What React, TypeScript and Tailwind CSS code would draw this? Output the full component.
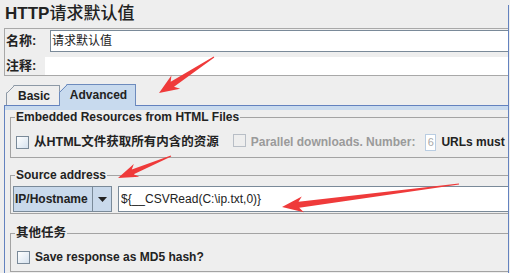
import React from "react";

const FONT = { fontFamily: '"Liberation Sans", "Noto Sans CJK SC", sans-serif' };

// tapered red arrow like a screenshot annotation tool draws
const arrowPoints = (
  tx: number,
  ty: number,
  px: number,
  py: number,
  head: number,
  half: number,
  shaft: number
) => {
  const len = Math.hypot(px - tx, py - ty);
  const dx = (px - tx) / len;
  const dy = (py - ty) / len;
  const nx = -dy;
  const ny = dx;
  const bx = px - dx * head;
  const by = py - dy * head;
  const wx = px - dx * (head + 4);
  const wy = py - dy * (head + 4);
  const pts = [
    [tx + nx * 0.6, ty + ny * 0.6],
    [bx + nx * shaft, by + ny * shaft],
    [wx + nx * half, wy + ny * half],
    [px, py],
    [wx - nx * half, wy - ny * half],
    [bx - nx * shaft, by - ny * shaft],
    [tx - nx * 0.6, ty - ny * 0.6],
  ];
  return pts.map((p) => `${p[0].toFixed(1)},${p[1].toFixed(1)}`).join(" ");
};

const Checkbox = ({ disabled }: { disabled?: boolean }) => (
  <span
    className={
      disabled
        ? "inline-block w-[13px] h-[13px] shrink-0 border border-[#b8bec6] bg-[#eeeeee]"
        : "inline-block w-[13px] h-[13px] shrink-0 border border-[#7a8a99] bg-gradient-to-br from-white to-[#d6e2ef]"
    }
  />
);

const TitledBox = ({
  title,
  className,
  titleClass,
  children,
}: {
  title: string;
  className?: string;
  titleClass?: string;
  children: React.ReactNode;
}) => (
  <fieldset
    className={`border border-r-0 border-[#a3a3a3] pl-[4px] ${className ?? ""}`}
  >
    <legend
      className={`px-[1px] h-[14px] leading-[14px] font-bold text-[#222] ${titleClass ?? "text-[12px]"}`}
    >
      {title}
    </legend>
    {children}
  </fieldset>
);

export default function App() {
  return (
    <div
      className="relative w-[510px] h-[273px] overflow-hidden bg-[#eeeeee] flex"
      style={FONT}
    >
      <div className="w-[508px] flex flex-col">
        {/* title */}
        <div className="h-[28px] pl-[5px] flex items-center text-[17px] text-[#222]">
          <span className="font-bold">HTTP</span>
          <span className="font-medium">请求默认值</span>
        </div>

        {/* name / comment */}
        <div className="ml-[4px] border-t border-l border-b border-[#a8a8a8] pt-px">
          <div className="flex h-[22px] items-center">
            <span className="w-[45px] pl-[1px] text-[13px] font-bold text-[#222]">名称:</span>
            <div className="flex-1 h-full bg-white border border-r-0 border-[#7a8a99] flex items-center pl-px text-[12px] text-[#222]">
              请求默认值
            </div>
          </div>
          <div className="flex h-[18px] items-center mt-[5px]">
            <span className="w-[40px] pl-[1px] text-[13px] font-bold text-[#222]">注释:</span>
            <div className="flex-1 h-full bg-white" />
          </div>
        </div>

        {/* tabs */}
        <div className="relative z-10 mt-[8px] ml-[6px] flex items-end h-[21px]">
          <div className="relative w-[54px] h-[20px] border-l border-t border-r border-[#8d99a6] bg-[#eeeeee] [clip-path:polygon(0_8px,8px_0,100%_0,100%_100%,0_100%)] flex items-center justify-center pl-[2px] text-[12px] font-bold text-[#222]">
            <svg className="absolute -left-px -top-px" width="10" height="10">
              <line x1="0.5" y1="8.5" x2="8.5" y2="0.5" stroke="#8d99a6" />
            </svg>
            Basic
          </div>
          <div className="relative w-[77px] h-[22px] -mb-px -ml-px border-l border-t border-r border-[#6d8bbd] bg-[#c8daee] [clip-path:polygon(0_8px,8px_0,100%_0,100%_100%,0_100%)] flex items-center justify-center pb-px pl-[2px] text-[12px] font-bold text-[#222]">
            <svg className="absolute -left-px -top-px" width="10" height="10">
              <line x1="0.5" y1="8.5" x2="8.5" y2="0.5" stroke="#6d8bbd" />
            </svg>
            Advanced
          </div>
        </div>

        {/* tab panel */}
        <div className="ml-[4px] flex-1 border-l border-t border-[#6382bf] overflow-hidden">
          <div className="h-[4px] bg-[#c8daee]" />
          <div className="pl-[5px]">
            <TitledBox title="Embedded Resources from HTML Files" className="pb-[5px]">
              <div className="flex items-center h-[20px] mt-[8px] pl-px whitespace-nowrap font-bold">
                <Checkbox />
                <span className="ml-[5px] text-[12.5px] text-[#222]">从HTML文件获取所有内含的资源</span>
                <span className="ml-[14px]">
                  <Checkbox disabled />
                </span>
                <span className="ml-[5px] text-[12px] text-[#9a9a9a]">Parallel downloads. Number:</span>
                <span className="ml-[10px] w-[11px] h-[17px] border border-[#b9cde2] bg-white flex items-center justify-center text-[11px] font-normal text-[#a8a8a8]">
                  6
                </span>
                <span className="ml-[5px] text-[12px] text-[#222]">URLs must match</span>
              </div>
            </TitledBox>

            <TitledBox title="Source address" className="mt-[10px] pb-[1px]">
              <div className="flex h-[26px] mt-[4px] -ml-[2px]">
                <div className="w-[99px] h-full flex border border-[#7a8a99] bg-[#c9d9eb]">
                  <span className="flex-1 flex items-center pl-px text-[12px] font-bold text-[#222]">
                    IP/Hostname
                  </span>
                  <span className="w-[19px] border-l border-[#7a8a99] flex items-center justify-center">
                    <svg width="9" height="5" viewBox="0 0 9 5">
                      <polygon points="0,0 9,0 4.5,5" fill="#222" />
                    </svg>
                  </span>
                </div>
                <div className="flex-1 ml-[6px] h-full bg-white border border-r-0 border-[#7a8a99] flex items-center pl-[2px] text-[12px] text-[#222]">
                  {"${__CSVRead(C:\\ip.txt,0)}"}
                </div>
              </div>
            </TitledBox>

            <TitledBox title="其他任务" titleClass="text-[12.5px]" className="mt-[12px] pb-[4px]">
              <div className="flex items-center h-[20px] mt-[7px] pl-[2px] text-[12px] font-bold text-[#222]">
                <Checkbox />
                <span className="ml-[5px]">Save response as MD5 hash?</span>
              </div>
            </TitledBox>
          </div>
        </div>
      </div>

      {/* right edge */}
      <div className="w-px flex flex-col">
        <div className="h-[5px]" />
        <div className="flex-1 bg-[#6382bf]" />
      </div>

      {/* annotation arrows */}
      <svg className="absolute inset-0 pointer-events-none" width="510" height="273">
        <polygon points={arrowPoints(214, 57, 159, 93, 16, 8, 3)} fill="#ef3a3a" />
        <polygon points={arrowPoints(171, 156, 118, 178, 16, 7, 2.5)} fill="#ef3a3a" />
        <polygon points={arrowPoints(459, 184, 282, 207, 17, 8, 3)} fill="#ef3a3a" />
      </svg>
    </div>
  );
}
